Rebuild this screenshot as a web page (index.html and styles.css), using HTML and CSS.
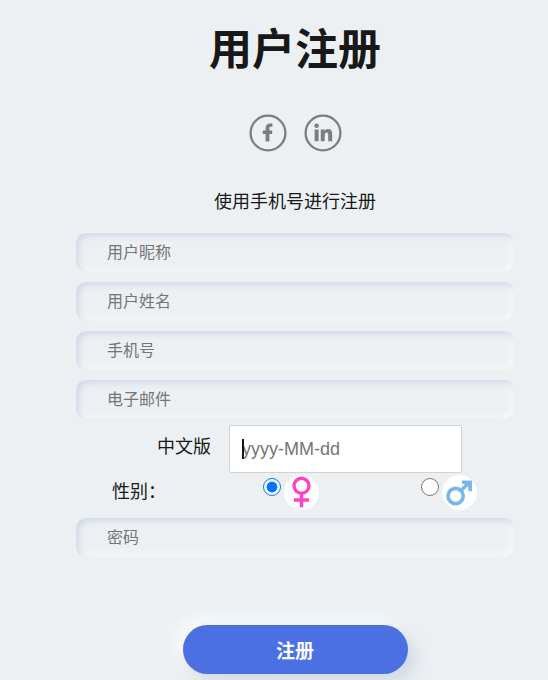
FILE: index.html
```
<!DOCTYPE html>
<html lang="zh-CN">
<head>
  <meta charset="UTF-8">
  <meta name="viewport" content="width=device-width, initial-scale=1.0">
  <title>用户注册</title>
  <link rel="stylesheet" href="styles.css">
</head>
<body>

  <form class="form">
    <h1 class="title">用户注册</h1>

    <div class="social">
      <a href="#" aria-label="Facebook">
        <svg class="social-icon" viewBox="0 0 38 38">
          <circle cx="19" cy="19" r="17.4" fill="none" stroke="#7b7d7e" stroke-width="2.3"/>
          <path fill="#7b7d7e" d="M16.6 27.5V20h-2.8v-3.5h2.8v-2.4c0-3.1 1.8-4.7 4.6-4.7.9 0 1.7.1 2.2.2v3.2h-1.5c-1.2 0-1.5.6-1.5 1.5v2.2h3l-.4 3.5h-2.6v7.5z"/>
        </svg>
      </a>
      <a href="#" aria-label="LinkedIn">
        <svg class="social-icon" viewBox="0 0 38 38">
          <circle cx="19" cy="19" r="17.4" fill="none" stroke="#7b7d7e" stroke-width="2.3"/>
          <circle cx="12.6" cy="11.8" r="2.3" fill="#7b7d7e"/>
          <path fill="#7b7d7e" d="M10.6 15.4h4v11.8h-4zM16.8 15.4h3.8V17c.8-1.2 2-1.9 3.4-1.9 3 0 4.2 1.8 4.2 4.9v7.2h-4v-6.4c0-1.5-.4-2.3-1.6-2.3-1.3 0-1.9 1-1.9 2.5v6.2h-3.9z"/>
        </svg>
      </a>
    </div>

    <p class="hint">使用手机号进行注册</p>

    <div class="fields">
      <input class="field" type="text" placeholder="用户昵称" aria-label="用户昵称">
      <input class="field" type="text" placeholder="用户姓名" aria-label="用户姓名">
      <input class="field" type="tel" placeholder="手机号" aria-label="手机号">
      <input class="field" type="email" placeholder="电子邮件" aria-label="电子邮件">
    </div>

    <div class="date-row">
      <label for="birthday">中文版</label>
      <div class="date-box">
        <input class="date-input" type="text" id="birthday" placeholder="yyyy-MM-dd">
      </div>
    </div>

    <div class="sex-row">
      <span class="sex-label" id="sexLabel">性别：</span>
      <div class="sex-options" role="radiogroup" aria-labelledby="sexLabel">
        <label class="sex-option">
          <input type="radio" name="sex" value="female" aria-label="女" checked>
          <svg class="sex-icon" viewBox="0 0 35 35" fill="none" stroke="#ff40c8" stroke-width="3.4">
            <circle cx="17.5" cy="17.5" r="17.5" fill="#fff" stroke="none"/>
            <circle cx="17.5" cy="10.8" r="7.5"/>
            <path d="M17.5 18.3v14M10 25h15"/>
          </svg>
        </label>
        <label class="sex-option">
          <input type="radio" name="sex" value="male" aria-label="男">
          <svg class="sex-icon" viewBox="0 0 35 35" fill="none" stroke="#74b8ec" stroke-width="3.6">
            <circle cx="17.5" cy="17.5" r="17.5" fill="#fff" stroke="none"/>
            <circle cx="13.6" cy="21" r="7.6"/>
            <path d="M19 15.6l8-8"/>
            <path fill="#74b8ec" stroke="none" d="M20 5.4h10v10.8h-3.4l-.6-4.6-2.4-2.4-3.6-.4z"/>
          </svg>
        </label>
      </div>
    </div>

    <input class="field" type="password" placeholder="密码" aria-label="密码">

    <button class="submit" type="submit">注册</button>
  </form>

</body>
</html>
```
FILE: styles.css
```
:root {
  --bg: #ecf0f3;
  --shadow-dark: #d1d9e6;
  --shadow-light: #f9f9f9;
  --text: #181818;
  --blue: #4b70e2;
}

* {
  box-sizing: border-box;
  margin: 0;
  padding: 0;
}

body {
  background-color: var(--bg);
  color: var(--text);
  font-family: "Liberation Sans", "Noto Sans CJK SC", sans-serif;
  font-size: 18px;
  padding: 20px 34px 6px 76px;
}

input,
button {
  font-family: inherit;
}

.form {
  display: flex;
  flex-direction: column;
  max-width: 480px;
  margin: 0 auto;
}

.title {
  font-size: 43px;
  font-weight: 700;
  line-height: 60px;
  text-align: center;
}

.social {
  display: flex;
  justify-content: center;
  gap: 17px;
  margin-top: 34px;
}

.social-icon {
  display: block;
  width: 38px;
  height: 38px;
}

.hint {
  line-height: 24px;
  margin: 38px 0 19px;
  text-align: center;
}

.fields {
  display: flex;
  flex-direction: column;
  gap: 10px;
}

.field {
  width: 100%;
  height: 39px;
  padding: 0 31px;
  border: none;
  outline: none;
  border-radius: 10px;
  background-color: var(--bg);
  box-shadow: inset 3px 3px 6px var(--shadow-dark), inset -3px -3px 6px var(--shadow-light);
  font-size: 16px;
}

.field::placeholder,
.date-input::placeholder {
  color: #757575;
}

.date-row {
  display: flex;
  align-items: center;
  justify-content: center;
  gap: 18px;
  margin-top: 6px;
  padding-left: 29px;
}

.date-row label {
  line-height: 24px;
  padding-bottom: 4px;
}

.date-box {
  position: relative;
  width: 233px;
}

/* text cursor */
.date-box::before {
  content: "";
  position: absolute;
  left: 13px;
  top: 14px;
  width: 2px;
  height: 20px;
  background-color: var(--text);
}

.date-input {
  display: block;
  width: 100%;
  height: 48px;
  padding: 0 12px;
  border: 1px solid #d2d2d2;
  border-radius: 2px;
  outline: none;
  background-color: #fff;
  font-size: 18px;
}

.sex-row {
  display: flex;
  height: 45px;
  padding: 2px 37px 0 36px;
}

.sex-label {
  flex: 1;
  line-height: 34px;
}

.sex-options {
  display: flex;
  gap: 102px;
}

.sex-option {
  display: flex;
  align-items: flex-start;
  gap: 3px;
}

.sex-option input {
  width: 18px;
  height: 18px;
  margin-top: 3px;
}

.sex-icon {
  width: 35px;
  height: 35px;
}

.submit {
  align-self: center;
  width: 225px;
  height: 49px;
  margin-top: 68px;
  border: none;
  border-radius: 25px;
  background-color: var(--blue);
  box-shadow: 8px 8px 16px var(--shadow-dark), -8px -8px 16px var(--shadow-light);
  color: var(--shadow-light);
  font-size: 19px;
  font-weight: 700;
  cursor: pointer;
}
```
